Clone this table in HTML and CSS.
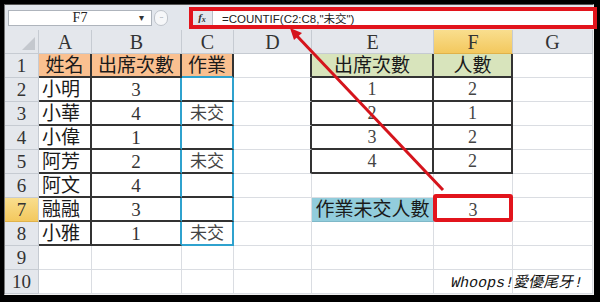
FILE: index.html
```html
<!DOCTYPE html>
<html lang="zh-Hant">
<head>
<meta charset="utf-8">
<title>COUNTIF</title>
<link rel="stylesheet" href="styles.css">
</head>
<body>
<div class="frame">
  <div class="fbar">
    <div class="namebox"><span class="ref">F7</span><span class="caret">▾</span></div>
    <div class="grip"><span class="dots">···</span></div>
    <div class="fxbox"><span class="fx">f<sub>x</sub></span></div>
    <div class="input">=COUNTIF(C2:C8,"未交")</div>
  </div>
  <div class="sheet">
    <div class="c h corner"><span class="tri"></span></div>
    <div class="c h">A</div><div class="c h">B</div><div class="c h">C</div><div class="c h">D</div><div class="c h">E</div><div class="c h sel">F</div><div class="c h">G</div>

    <div class="c h rh">1</div>
    <div class="c pe br bb">姓名</div><div class="c pe br bb">出席次數</div><div class="c pe br cyb">作業</div><div class="c br"></div><div class="c gr br bb">出席次數</div><div class="c gr br bb">人數</div><div class="c"></div>

    <div class="c h rh">2</div>
    <div class="c nm br bb">小明</div><div class="c num cyr bb">3</div><div class="c cyr bb"></div><div class="c br"></div><div class="c num2 br bb">1</div><div class="c num2 br bb">2</div><div class="c"></div>

    <div class="c h rh">3</div>
    <div class="c nm br bb">小華</div><div class="c num cyr bb">4</div><div class="c nt cyr bb">未交</div><div class="c br"></div><div class="c num2 br bb">2</div><div class="c num2 br bb">1</div><div class="c"></div>

    <div class="c h rh">4</div>
    <div class="c nm br bb">小偉</div><div class="c num cyr bb">1</div><div class="c cyr bb"></div><div class="c br"></div><div class="c num2 br bb">3</div><div class="c num2 br bb">2</div><div class="c"></div>

    <div class="c h rh">5</div>
    <div class="c nm br bb">阿芳</div><div class="c num cyr bb">2</div><div class="c nt cyr bb">未交</div><div class="c br"></div><div class="c num2 br bb">4</div><div class="c num2 br bb">2</div><div class="c"></div>

    <div class="c h rh">6</div>
    <div class="c nm br bb">阿文</div><div class="c num cyr bb">4</div><div class="c cyr bb"></div><div class="c"></div><div class="c"></div><div class="c"></div><div class="c"></div>

    <div class="c h rh sel">7</div>
    <div class="c nm br bb">融融</div><div class="c num cyr bb">3</div><div class="c cyr bb"></div><div class="c"></div><div class="c bl">作業未交人數</div><div class="c num2">3</div><div class="c"></div>

    <div class="c h rh">8</div>
    <div class="c nm br bb">小雅</div><div class="c num cyr bb">1</div><div class="c nt cyr cyb">未交</div><div class="c"></div><div class="c"></div><div class="c"></div><div class="c"></div>

    <div class="c h rh">9</div>
    <div class="c"></div><div class="c"></div><div class="c"></div><div class="c"></div><div class="c"></div><div class="c"></div><div class="c"></div>

    <div class="c h rh">10</div>
    <div class="c"></div><div class="c"></div><div class="c"></div><div class="c"></div><div class="c"></div><div class="c"></div><div class="c"></div>
  </div>

  <div class="ann ann-formula"></div>
  <div class="ann ann-cell"></div>
  <svg class="arrow" width="588" height="289" viewBox="0 0 588 289">
    <line x1="438" y1="185" x2="292" y2="31" stroke="#D5141C" stroke-width="3"/>
    <polygon points="285,23 297,28 289,35" fill="#D5141C"/>
  </svg>
  <div class="wm">Whoops!愛優尾牙!</div>
</div>
</body>
</html>
```
FILE: styles.css
```css
* { box-sizing: border-box; }
html, body { margin: 0; padding: 0; }
body { background: #000; width: 600px; height: 302px; overflow: hidden; }

.frame {
  position: relative;
  margin: 4px 0 0 4px;
  width: 590px;
  height: 291px;
  border: 1px solid #f0f0f0;
  border-left-color: #777;
  border-top-color: #555;
  background: #fff;
}

.fbar {
  height: 25px;
  background: #E2E6EC;
  display: flex;
  align-items: center;
  padding-left: 3px;
}
.namebox {
  width: 144px;
  height: 16px;
  background: #fff;
  border: 1px solid #AEB4BC;
  display: flex;
  align-items: center;
}
.ref {
  flex: 1;
  text-align: center;
  font: 14px "Liberation Serif", serif;
  color: #222;
  padding-left: 12px;
}
.caret { width: 12px; font: 10px "DejaVu Sans", sans-serif; color: #333; }
.grip {
  width: 14px;
  height: 16px;
  margin-left: 2px;
  border: 1px solid #BFC4CB;
  border-radius: 8px;
  background: #F6F7F9;
  display: flex;
  align-items: center;
  justify-content: center;
}
.dots { font: 7px "DejaVu Sans", sans-serif; color: #9aa; letter-spacing: -1px; }
.fxbox {
  margin-left: 24px;
  width: 21px;
  height: 17px;
  border-right: 1px solid #B9BFC7;
  display: flex;
  align-items: center;
  justify-content: center;
}
.fx { font: italic bold 11px "Liberation Serif", serif; color: #333; }
.fx sub { font-size: 8px; vertical-align: -1px; }
.input {
  flex: 1;
  height: 19px;
  background: #fff;
  padding-left: 9px;
  font: 11.5px "Liberation Sans", "Noto Sans CJK TC", sans-serif;
  color: #222;
  display: flex;
  align-items: center;
}

.sheet {
  display: grid;
  grid-template-columns: 34px 53px 90px 52px 78px 122px 79px 80px;
  grid-auto-rows: 24px;
}
.c {
  border-right: 1px solid #DADDE2;
  border-bottom: 1px solid #DADDE2;
  font: 19px "Liberation Serif", "Noto Sans CJK TC", serif;
  color: #1a1a1a;
  display: flex;
  align-items: center;
  justify-content: center;
  line-height: 1;
  white-space: nowrap;
  overflow: hidden;
}
.h {
  background: #E4E7EC;
  border-right-color: #C6CBD2;
  border-bottom-color: #C6CBD2;
  color: #333;
  font-size: 20px;
}
.rh { font-size: 19px; }
.sel { background: linear-gradient(#F9DE8E, #F3C85E); border-bottom-color: #E0B24A; }
.corner { align-items: flex-end; justify-content: flex-end; padding: 0 3px 3px 0; }
.tri {
  width: 0; height: 0;
  border-left: 13px solid transparent;
  border-bottom: 13px solid #C4C8CE;
}

.pe { background: #FAC090; }
.gr { background: #D8E4BC; }
.bl { background: #92CDDC; border-right-color: #7FB8C8; border-bottom-color: #7FB8C8; }
.br { border-right: 2px solid #333; }
.bb { border-bottom: 2px solid #333; }
.cyr { border-right: 2px solid #2FA2CE; }
.cyb { border-bottom: 2px solid #2FA2CE; }
.nm { justify-content: flex-start; padding-left: 3px; }
.num { color: #333; }
.num2 { color: #444; font-size: 18px; }
.nt { color: #444; font-size: 17px; }

.ann {
  position: absolute;
  border: 4px solid #E2141C;
  pointer-events: none;
}
.ann-formula { left: 184px; top: 2px; width: 408px; height: 22px; }
.ann-cell { left: 428px; top: 189px; width: 80px; height: 28px; border-radius: 3px; }
.arrow { position: absolute; left: 0; top: 0; pointer-events: none; }
.wm {
  position: absolute;
  right: 10px;
  bottom: 2px;
  font: 15px "Liberation Mono", "Noto Sans CJK TC", monospace;
  line-height: 16px;
  color: #111;
  transform: skewX(-12deg);
}
```
